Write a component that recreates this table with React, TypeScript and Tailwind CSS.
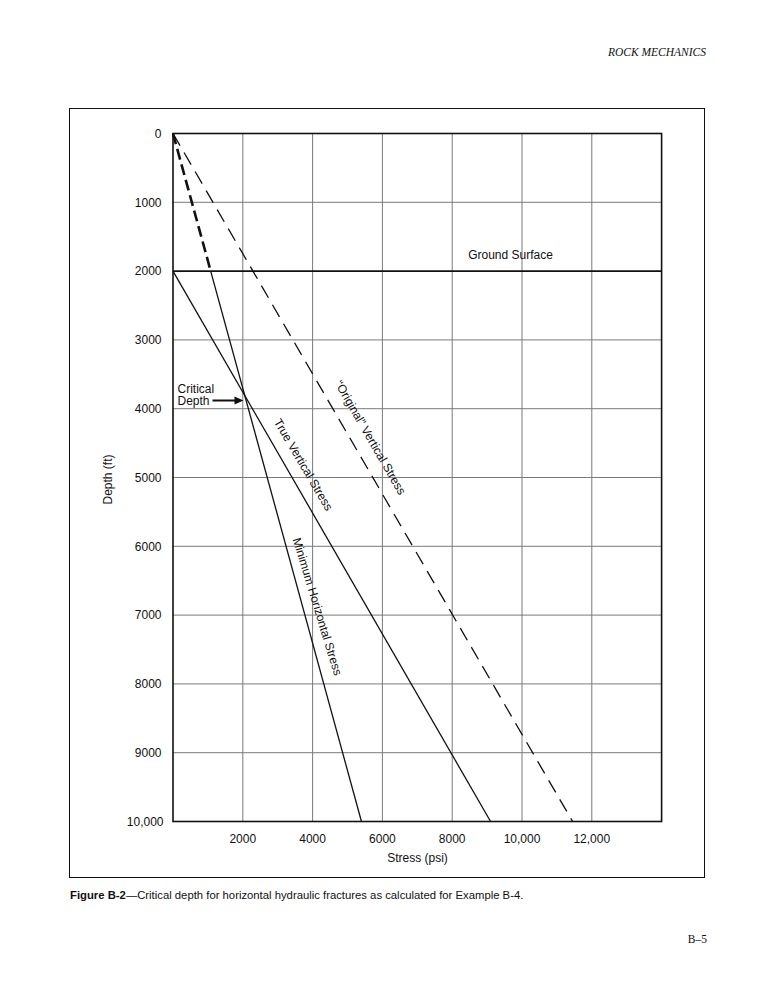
const X0 = 173.5;
const Y0 = 134;
const px = (psi: number) => X0 + psi * 0.0349;
const py = (ft: number) => Y0 + ft * 0.0688;

const depthTicks = [0, 1000, 2000, 3000, 4000, 5000, 6000, 7000, 8000, 9000, 10000];
const stressTicks = [2000, 4000, 6000, 8000, 10000, 12000];

const fmt = (n: number) => (n >= 10000 ? n.toLocaleString('en-US') : String(n));

function StressChart() {
  const right = px(14000);
  const bottom = py(10000);

  return (
    <svg width={633} height={767} className="block">
      <g transform="translate(-70.5,-109.5)" fontSize={12} fill="#111">
        {/* grid */}
        {stressTicks.map((s) => (
          <line key={'v' + s} x1={px(s)} y1={Y0} x2={px(s)} y2={bottom} stroke="#7a7a7a" strokeWidth={1} />
        ))}
        {depthTicks.slice(1, -1).map((d) => (
          <line
            key={'h' + d}
            x1={X0}
            y1={py(d)}
            x2={right}
            y2={py(d)}
            stroke={d === 2000 ? '#111' : '#7a7a7a'}
            strokeWidth={d === 2000 ? 1.6 : 1}
          />
        ))}
        <rect x={X0} y={Y0} width={right - X0} height={bottom - Y0} fill="none" stroke="#111" strokeWidth={1.6} />

        {/* "original" vertical stress */}
        <line x1={px(0)} y1={py(0)} x2={px(11450)} y2={py(10000)} stroke="#111" strokeWidth={1.3} strokeDasharray="14 8" />
        {/* minimum horizontal stress, dashed above ground surface */}
        <line x1={px(0)} y1={py(0)} x2={px(1080)} y2={py(2000)} stroke="#111" strokeWidth={2.6} strokeDasharray="11 5" />
        <line x1={px(1080)} y1={py(2000)} x2={px(5400)} y2={py(10000)} stroke="#111" strokeWidth={1.3} />
        {/* true vertical stress */}
        <line x1={px(0)} y1={py(2000)} x2={px(9100)} y2={py(10000)} stroke="#111" strokeWidth={1.3} />

        {/* depth ticks */}
        {depthTicks.map((d) => (
          <text key={'dl' + d} x={d === 10000 ? 164 : 162} y={py(d)} dy="0.35em" textAnchor="end">
            {fmt(d)}
          </text>
        ))}
        {stressTicks.map((s) => (
          <text key={'sl' + s} x={px(s)} y={839} dy="0.35em" textAnchor="middle">
            {fmt(s)}
          </text>
        ))}
        <text x={418} y={858} dy="0.35em" textAnchor="middle">Stress (psi)</text>
        <text transform="translate(108,480) rotate(-90)" dy="0.35em" textAnchor="middle">Depth (ft)</text>

        <text x={511} y={255} dy="0.35em" textAnchor="middle">Ground Surface</text>

        <text x={178} y={393}>Critical</text>
        <text x={178} y={405.5}>Depth</text>
        <line x1={213} y1={401} x2={236} y2={401} stroke="#111" strokeWidth={2} />
        <polygon points="235,397 244,401 235,405" fill="#111" />

        <text transform="translate(371,438) rotate(60)" dy="0.35em" textAnchor="middle">
          “Original” Vertical Stress
        </text>
        <text transform="translate(304,465) rotate(59.5)" dy="0.35em" textAnchor="middle">
          True Vertical Stress
        </text>
        <text transform="translate(318,607) rotate(73)" dy="0.35em" textAnchor="middle">
          Minimum Horizontal Stress
        </text>
      </g>
    </svg>
  );
}

export default function App() {
  return (
    <div className="w-[772px] h-[1000px] bg-white text-[#111]">
      <div className="pt-[45px] pr-[66px] text-right font-['Liberation_Serif',serif] italic text-[11.5px] leading-[14px]">
        ROCK MECHANICS
      </div>
      <div className="mt-[49px] ml-[69px] w-[636px] h-[770px] border-[1.5px] border-[#111] font-['Liberation_Sans',Arial,sans-serif]">
        <StressChart />
      </div>
      <p className="mt-[10px] pl-[70px] font-['Liberation_Sans',Arial,sans-serif] text-[11.3px] leading-[14px]">
        <span className="font-bold">Figure B-2</span>—Critical depth for horizontal hydraulic fractures as calculated for Example B-4.
      </p>
      <div className="mt-[30px] pr-[65px] text-right font-['Liberation_Serif',serif] text-[11.5px] leading-[14px]">
        B–5
      </div>
    </div>
  );
}
